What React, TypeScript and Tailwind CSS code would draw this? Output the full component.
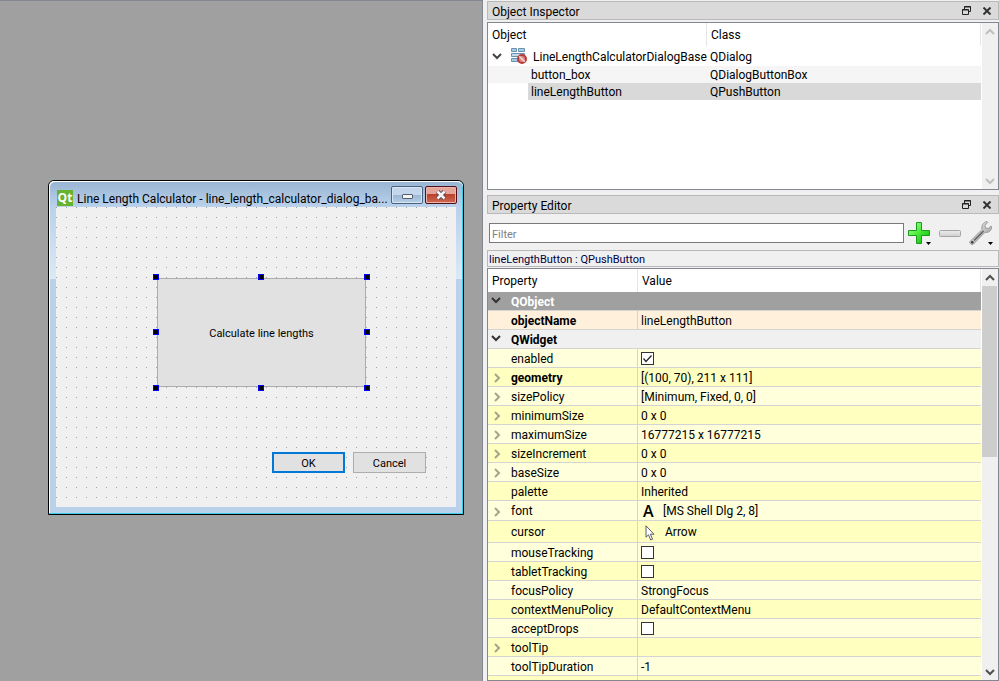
import React from "react";

type Row = {
  name: string;
  kind: "group-dark" | "group-light" | "prop";
  bold?: boolean;
  expandable?: boolean;
  value?: string;
  check?: boolean;
  icon?: "font" | "cursor";
  tone?: string;
  height?: string;
};

const LIGHT = "bg-[#ffffdc]";
const DEEP = "bg-[#ffffbf]";

const rows: Row[] = [
  { name: "QObject", kind: "group-dark" },
  { name: "objectName", kind: "prop", bold: true, value: "lineLengthButton", tone: "bg-[#fff0dc]" },
  { name: "QWidget", kind: "group-light" },
  { name: "enabled", kind: "prop", check: true, tone: LIGHT },
  { name: "geometry", kind: "prop", bold: true, expandable: true, value: "[(100, 70), 211 x 111]", tone: DEEP },
  { name: "sizePolicy", kind: "prop", expandable: true, value: "[Minimum, Fixed, 0, 0]", tone: LIGHT },
  { name: "minimumSize", kind: "prop", expandable: true, value: "0 x 0", tone: DEEP },
  { name: "maximumSize", kind: "prop", expandable: true, value: "16777215 x 16777215", tone: LIGHT },
  { name: "sizeIncrement", kind: "prop", expandable: true, value: "0 x 0", tone: DEEP },
  { name: "baseSize", kind: "prop", expandable: true, value: "0 x 0", tone: LIGHT },
  { name: "palette", kind: "prop", value: "Inherited", tone: DEEP },
  { name: "font", kind: "prop", expandable: true, value: "[MS Shell Dlg 2, 8]", icon: "font", tone: LIGHT, height: "h-5" },
  { name: "cursor", kind: "prop", value: "Arrow", icon: "cursor", tone: DEEP, height: "h-[22px]" },
  { name: "mouseTracking", kind: "prop", check: false, tone: LIGHT },
  { name: "tabletTracking", kind: "prop", check: false, tone: DEEP },
  { name: "focusPolicy", kind: "prop", value: "StrongFocus", tone: LIGHT },
  { name: "contextMenuPolicy", kind: "prop", value: "DefaultContextMenu", tone: DEEP },
  { name: "acceptDrops", kind: "prop", check: false, tone: LIGHT },
  { name: "toolTip", kind: "prop", expandable: true, value: "", tone: DEEP },
  { name: "toolTipDuration", kind: "prop", value: "-1", tone: LIGHT },
  { name: "", kind: "prop", value: "", tone: DEEP },
];

function Chevron({ dir, color }: { dir: "down" | "up" | "right"; color: string }) {
  const d = dir === "down" ? "M1 3 L5 7 L9 3" : dir === "up" ? "M1 7 L5 3 L9 7" : "M3 1 L7 5 L3 9";
  return (
    <svg width="10" height="10" viewBox="0 0 10 10" fill="none" className="block" aria-hidden="true">
      <path d={d} stroke={color} strokeWidth="2" />
    </svg>
  );
}

function DockTitle({ title }: { title: string }) {
  return (
    <div className="flex h-[19px] shrink-0 items-center border border-[#b9b9b9] bg-[#dadada] pr-[7px] pl-1">
      <h2 className="flex-1 pt-[3px]">{title}</h2>
      <button type="button" aria-label={`Float ${title}`} className="mr-3">
        <svg width="9" height="9" viewBox="0 0 9 9" fill="none" className="block">
          <path d="M2.500 3V.5h6v5H6.500M2 1h7" stroke="#222" />
          <path d="M.5 3.500h6v5h-6zM0 4h7" stroke="#222" />
        </svg>
      </button>
      <button type="button" aria-label={`Close ${title}`}>
        <svg width="8" height="8" viewBox="0 0 8 8" fill="none" className="block">
          <path d="M.5.5l7 7M7.500.5l-7 7" stroke="#333" strokeWidth="2" />
        </svg>
      </button>
    </div>
  );
}

function ScrollBar({ active }: { active?: boolean }) {
  const color = active ? "#505050" : "#bfbfbf";
  return (
    <div className="flex w-4 shrink-0 flex-col items-center bg-[#f0f0f0]">
      <button type="button" aria-label="Scroll up" className="flex h-[17px] w-full shrink-0 items-center justify-center">
        <Chevron dir="up" color={color} />
      </button>
      <div className="w-full flex-1 pr-px">{active && <div className="h-[171px] bg-[#cdcdcd]" />}</div>
      <button type="button" aria-label="Scroll down" className="flex h-[17px] w-full shrink-0 items-center justify-center">
        <Chevron dir="down" color={color} />
      </button>
    </div>
  );
}

function DialogFormIcon() {
  return (
    <svg width="16" height="16" viewBox="0 0 16 16" className="block shrink-0" aria-hidden="true">
      <g fill="#a5cbe2" stroke="#6a93b0">
        <path d="M.5.5h5v3h-5zM7.500.5h6v3h-6z" />
        <path d="M.5 5.500h13v3H.5z" fill="#c4dcea" />
        <path d="M.5 10.500h8v3h-8z" />
      </g>
      <circle cx="11" cy="11" r="4" fill="#d98a86" stroke="#b93a36" strokeWidth="2" />
      <path d="M8.200 8.200l5.600 5.600" stroke="#f3dcda" strokeWidth="1.500" />
    </svg>
  );
}

function ObjectInspector() {
  return (
    <section className="flex flex-col gap-[2px]">
      <DockTitle title="Object Inspector" />
      <div className="flex h-[168px] border border-[#828790] bg-white">
        <div className="min-w-0 flex-1">
          <table className="w-full table-fixed border-separate border-spacing-0 text-left">
            <colgroup>
              <col className="w-[219px]" />
              <col />
            </colgroup>
            <thead>
              <tr>
                <th className="h-[23px] border-r border-[#e5e5e5] p-0 pt-[2px] pl-1 font-normal">Object</th>
                <th className="h-[23px] border-r border-[#e5e5e5] p-0 pt-[2px] pl-1 font-normal">Class</th>
              </tr>
            </thead>
            <tbody>
              <tr>
                <td className="h-5 p-0">
                  <div className="flex items-center whitespace-nowrap">
                    <span className="w-[23px] shrink-0 pl-1">
                      <Chevron dir="down" color="#444" />
                    </span>
                    <DialogFormIcon />
                    <span className="pt-[2px] pl-[6px]">LineLengthCalculatorDialogBase</span>
                  </div>
                </td>
                <td className="h-5 p-0 pt-[2px] pl-[3px]">QDialog</td>
              </tr>
              <tr className="bg-[#f5f5f5]">
                <td className="h-[17px] p-0 pt-[2px] pl-[43px]">button_box</td>
                <td className="h-[17px] p-0 pt-[2px] pl-[3px]">QDialogButtonBox</td>
              </tr>
              <tr>
                <td className="h-[17px] p-0 pl-10">
                  <div className="bg-[#d9d9d9] pt-[2px] pl-[3px]">lineLengthButton</div>
                </td>
                <td className="h-[17px] bg-[#d9d9d9] p-0 pt-[2px] pl-[3px]">QPushButton</td>
              </tr>
            </tbody>
          </table>
        </div>
        <div className="w-px shrink-0" />
        <ScrollBar />
      </div>
    </section>
  );
}

function MenuArrow() {
  return (
    <svg width="5" height="3" viewBox="0 0 5 3" className="absolute right-0 bottom-0 block" aria-hidden="true">
      <path d="M0 0h5L2.500 3z" fill="#000" />
    </svg>
  );
}

function FilterBar() {
  return (
    <div className="flex h-9 shrink-0 items-center pt-[2px] pl-[2px]">
      <input
        type="text"
        aria-label="Filter"
        placeholder="Filter"
        className="h-5 min-w-0 flex-1 border border-[#7a7a7a] bg-white px-[2px] pt-[2px] text-[11px] outline-none placeholder:text-[#808080]"
      />
      <button type="button" aria-label="Add dynamic property" className="relative ml-1 h-6 w-[23px]">
        <svg width="22" height="22" viewBox="0 0 22 22" className="block" aria-hidden="true">
          <defs>
            <linearGradient id="plus" x1="0" y1="0" x2="1" y2="1">
              <stop offset="0" stopColor="#b8ffb0" />
              <stop offset=".45" stopColor="#4fee3f" />
              <stop offset="1" stopColor="#00b400" />
            </linearGradient>
          </defs>
          <path
            d="M8.500.5h5v8h8v5h-8v8h-5v-8h-8v-5h8z"
            fill="url(#plus)"
            stroke="#1c9a1c"
            strokeLinejoin="round"
          />
        </svg>
        <MenuArrow />
      </button>
      <button type="button" aria-label="Remove dynamic property" className="ml-2">
        <svg width="22" height="7" viewBox="0 0 22 7" className="block" aria-hidden="true">
          <defs>
            <linearGradient id="minus" x1="0" y1="0" x2="0" y2="1">
              <stop offset="0" stopColor="#ececec" />
              <stop offset="1" stopColor="#cfcfcf" />
            </linearGradient>
          </defs>
          <rect x=".5" y=".5" width="21" height="6" rx="1" fill="url(#minus)" stroke="#a5a5a5" />
        </svg>
      </button>
      <button type="button" aria-label="Configure property editor" className="relative mr-[6px] ml-2 h-6 w-6">
        <svg width="24" height="24" viewBox="0 0 24 24" className="block" aria-hidden="true">
          <defs>
            <linearGradient id="steel" x1="0" y1="0" x2="1" y2="1">
              <stop offset="0" stopColor="#f8f8f8" />
              <stop offset=".5" stopColor="#c4c4c4" />
              <stop offset="1" stopColor="#8e8e8e" />
            </linearGradient>
          </defs>
          <path
            d="M1 20.500L13 8.500c-.8-3.800 1-7 5-8l.8.8-2.800 3 .5 2.700 2.800.5 2.600-2.500.6.8c.2 3.700-3 6.200-6.500 5.500L4.500 23c-1.500 1.500-5-1-3.500-2.500z"
            fill="url(#steel)"
            stroke="#8a8a8a"
            strokeWidth=".8"
          />
          <path d="M5 19.500L14.500 10" stroke="#555" strokeWidth="1.200" />
          <circle cx="3.200" cy="21.200" r="1.200" fill="#333" />
        </svg>
        <MenuArrow />
      </button>
    </div>
  );
}

function ValueCell({ row }: { row: Row }) {
  if (row.check !== undefined) {
    return (
      <span className="relative block h-[13px] w-[13px]">
        <input
          id={row.name}
          type="checkbox"
          defaultChecked={row.check}
          className="peer block h-[13px] w-[13px] appearance-none border border-[#333] bg-white"
        />
        <svg
          width="13"
          height="13"
          viewBox="0 0 13 13"
          fill="none"
          className="pointer-events-none absolute inset-0 hidden peer-checked:block"
          aria-hidden="true"
        >
          <path d="M2.500 6.500l2.500 3 5.500-6" stroke="#222" strokeWidth="1.200" />
        </svg>
      </span>
    );
  }
  if (row.icon === "font") {
    return (
      <span className="flex items-center">
        <span className="w-[22px] pl-[2px] font-['Open_Sans','Noto_Sans',sans-serif] text-base leading-[15px] font-semibold">
          A
        </span>
        {row.value}
      </span>
    );
  }
  if (row.icon === "cursor") {
    return (
      <span className="flex items-center">
        <span className="w-6 pl-1">
          <svg width="10" height="16" viewBox="0 0 10 16" className="block" aria-hidden="true">
            <path
              d="M1 .8v11.400l2.500-2.400 2.200 5.200 1.900-.8-2.200-5H9z"
              fill="#fff"
              stroke="#444b60"
              strokeWidth=".9"
            />
          </svg>
        </span>
        {row.value}
      </span>
    );
  }
  return <>{row.value}</>;
}

function PropertyTable() {
  return (
    <div className="flex min-h-0 flex-1 border border-[#828790] bg-white">
      <div className="min-w-0 flex-1 overflow-hidden">
        <table className="w-full table-fixed border-separate border-spacing-0 text-left">
          <colgroup>
            <col className="w-[150px]" />
            <col />
          </colgroup>
          <thead>
            <tr>
              <th className="h-[23px] border-r border-[#e5e5e5] p-0 pt-[2px] pl-1 font-normal">Property</th>
              <th className="h-[23px] border-r border-[#e5e5e5] p-0 pt-[2px] pl-1 font-normal">Value</th>
            </tr>
          </thead>
          <tbody>
            {rows.map((row, i) => {
              if (row.kind !== "prop") {
                const dark = row.kind === "group-dark";
                return (
                  <tr key={i} className={dark ? "bg-[#a0a0a0] text-white" : "bg-[#f0f0f0]"}>
                    <th colSpan={2} className="h-[19px] border-b border-[#d4d4d4] p-0 font-bold">
                      <div className="flex">
                        <span className="w-[23px] pt-[2px] pl-[3px]">
                          <Chevron dir="down" color="#333" />
                        </span>
                        <span className="pt-[2px]">{row.name}</span>
                      </div>
                    </th>
                  </tr>
                );
              }
              const h = row.height ?? "h-[19px]";
              const lead = row.check === undefined ? "pt-[2px]" : "";
              return (
                <tr key={i} className={row.tone}>
                  <td className={`${h} border-r border-b border-[#d4d4d4] p-0 pt-[2px] ${row.bold ? "font-bold" : ""}`}>
                    <div className="flex items-center">
                      <span className="w-[23px] pl-1">
                        {row.expandable && <Chevron dir="right" color="#a5a58a" />}
                      </span>
                      {row.check !== undefined ? <label htmlFor={row.name}>{row.name}</label> : row.name}
                    </div>
                  </td>
                  <td className={`${h} border-b border-[#d4d4d4] p-0 pl-[3px] ${lead}`}>
                    <ValueCell row={row} />
                  </td>
                </tr>
              );
            })}
          </tbody>
        </table>
      </div>
      <div className="w-px shrink-0" />
      <ScrollBar active />
    </div>
  );
}

function Handle({ place }: { place: string }) {
  return <span className={`absolute h-[6px] w-[6px] border border-[#0000ff] bg-black ${place}`} />;
}

function DesignedDialog() {
  return (
    <div className="absolute top-[180px] left-12 w-[416px] rounded-t-md border border-black bg-[#b9d1ea] shadow-[inset_-1px_-1px_0_#35d0e8,inset_1px_1px_0_#ffffff]">
      <div className="flex h-[26px] items-start rounded-t-md bg-[linear-gradient(#98b4d2,#bad2ec)] pr-[6px] pl-2 shadow-[inset_0_1px_0_#ffffff,inset_1px_0_0_#ffffff,inset_-1px_0_0_#35d0e8]">
        <span className="mt-[9px] flex h-4 w-4 shrink-0 items-center justify-center bg-[#65b32e] font-['Open_Sans','Noto_Sans',sans-serif] text-xs leading-4 font-bold text-white">
          Qt
        </span>
        <h1 className="mt-[10px] min-w-0 flex-1 pl-1 leading-4 whitespace-nowrap">
          Line Length Calculator - line_length_calculator_dialog_ba...
        </h1>
        <div className="mt-[5px] flex shrink-0 gap-[2px]">
          <button
            type="button"
            aria-label="Minimize"
            className="flex h-[18px] w-8 items-center justify-center rounded-xs border border-[#4b6380] bg-[linear-gradient(#c3d6ec_50%,#9bb6d4_50%,#b7cfe8)] shadow-[inset_0_0_0_1px_#d8e5f3]"
          >
            <span className="mt-[3px] h-[5px] w-[11px] rounded-[1px] border border-[#555f70] bg-[#f4f4f4]" />
          </button>
          <button
            type="button"
            aria-label="Close"
            className="flex h-[18px] w-8 items-center justify-center rounded-xs border border-[#4f1018] bg-[linear-gradient(#e6a59a_45%,#bb3f27_45%,#cf6a55)] shadow-[inset_0_0_0_1px_#e9b5ac]"
          >
            <svg width="12" height="10" viewBox="0 0 12 10" fill="none" aria-hidden="true">
              <path d="M2.500 1.500l7 7M9.500 1.500l-7 7" stroke="#5a4a55" strokeWidth="4.500" />
              <path d="M2.500 1.500l7 7M9.500 1.500l-7 7" stroke="#f6f6f6" strokeWidth="2.500" />
            </svg>
          </button>
        </div>
      </div>
      <div className="mx-px mb-px bg-[linear-gradient(#b9d1ea,#dde9f6_72px,#b9d1ea_72px)] px-[6px] pb-[6px]">
        <div className="flex h-[300px] flex-col bg-[#f0f0f0] bg-[linear-gradient(90deg,transparent_1px,#f0f0f0_1px),linear-gradient(#a0a0a0_1px,#f0f0f0_1px)] bg-size-[10px_10px] text-[11px]">
          <div className="relative mt-[71px] ml-[101px] h-[109px] w-[209px]">
            <button type="button" className="h-full w-full border border-[#adadad] bg-[#e1e1e1] pt-[2px]">
              Calculate line lengths
            </button>
            <Handle place="-top-1 -left-1" />
            <Handle place="-top-1 left-[101px]" />
            <Handle place="-top-1 left-[207px]" />
            <Handle place="top-[51px] -left-1" />
            <Handle place="top-[51px] left-[207px]" />
            <Handle place="top-[107px] -left-1" />
            <Handle place="top-[107px] left-[101px]" />
            <Handle place="top-[107px] left-[207px]" />
          </div>
          <div className="mt-[65px] mr-[30px] flex justify-end gap-2">
            <button type="button" className="h-[21px] w-[73px] border-2 border-[#0078d7] bg-[#e1e1e1] pt-[2px]">
              OK
            </button>
            <button type="button" className="h-[21px] w-[73px] border border-[#adadad] bg-[#e1e1e1] pt-[2px]">
              Cancel
            </button>
          </div>
        </div>
      </div>
    </div>
  );
}

export default function App() {
  return (
    <div className="flex h-screen overflow-hidden bg-[#f0f0f0] font-[Roboto,'Noto_Sans',sans-serif] text-xs leading-[15px] text-black">
      <main className="relative min-w-0 flex-1 border-r border-[#828790] bg-[#a0a0a0] shadow-[inset_0_1px_0_#828790]">
        <DesignedDialog />
      </main>
      <aside className="ml-1 flex w-[512px] shrink-0 flex-col pt-px">
        <ObjectInspector />
        <section className="mt-[5px] flex min-h-0 flex-1 flex-col">
          <DockTitle title="Property Editor" />
          <FilterBar />
          <div className="mb-px flex h-[17px] shrink-0 items-center border border-[#b9b9b9] px-px pt-[2px] text-[11px] text-[#000040]">
            lineLengthButton : QPushButton
          </div>
          <PropertyTable />
        </section>
      </aside>
    </div>
  );
}
